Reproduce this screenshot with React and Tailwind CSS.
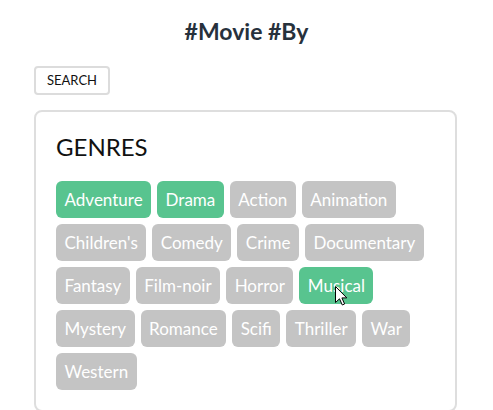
import { useState } from "react";

const GENRES = [
  "Adventure", "Drama", "Action", "Animation",
  "Children's", "Comedy", "Crime", "Documentary",
  "Fantasy", "Film-noir", "Horror", "Musical",
  "Mystery", "Romance", "Scifi", "Thriller", "War",
  "Western",
];

function Cursor() {
  return (
    <svg
      width="13"
      height="20"
      viewBox="0 0 13 20"
      className="pointer-events-none absolute left-[36px] top-[19px]"
    >
      <path
        d="M0.5 0.5 L0.5 16.5 L4.5 12.8 L7.3 19 L9.6 18 L6.9 11.9 L11.8 11.9 Z"
        fill="#fff"
        stroke="#000"
        strokeWidth="1"
        strokeLinejoin="round"
      />
    </svg>
  );
}

export default function App() {
  const [selected, setSelected] = useState(["Adventure", "Drama", "Musical"]);

  function toggle(g) {
    setSelected((s) => (s.includes(g) ? s.filter((x) => x !== g) : [...s, g]));
  }

  return (
    <div
      className="min-h-screen bg-white pt-[17px]"
      style={{ fontFamily: "Lato, 'Open Sans', sans-serif" }}
    >
      {/* TITLE */}
      <h1 className="text-center text-[23px] leading-[29px] font-bold text-[#27313c]">
        #Movie #By
      </h1>

      <div className="px-[34px] pt-[20px]">
        {/* SEARCH */}
        <button className="rounded-[4px] border-2 border-[#dcdcdc] bg-white px-[11px] text-[13px] leading-[25px] text-[#111]">
          SEARCH
        </button>

        {/* CARD */}
        <div className="mt-[15px] w-[423px] rounded-[8px] border-2 border-[#dedede] p-[20px]">
          <h2 className="text-[24px] leading-[29px] text-[#111]">GENRES</h2>

          <div className="mt-[20px] flex flex-wrap gap-[6px]">
            {GENRES.map((g) => {
              const on = selected.includes(g);
              return (
                <span
                  key={g}
                  onClick={() => toggle(g)}
                  className={
                    "relative cursor-pointer rounded-[6px] px-[8.5px] py-[8px] text-[17px] leading-[21px] text-white " +
                    (on ? "bg-[#58c48f]" : "bg-[#c4c4c4]")
                  }
                >
                  {g}
                  {g === "Musical" && <Cursor />}
                </span>
              );
            })}
          </div>
        </div>
      </div>
    </div>
  );
}
